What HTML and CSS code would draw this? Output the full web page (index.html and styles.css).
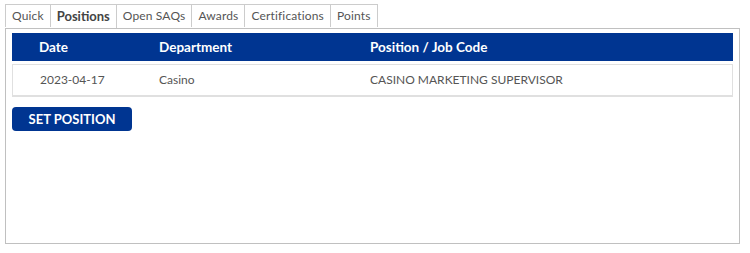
FILE: index.html
```html
<!DOCTYPE html>
<html lang="en">
<head>
<meta charset="UTF-8" />
<title>Positions</title>
<link rel="stylesheet" href="styles.css">
</head>
<body>

<div class="tabs">
  <div class="tab">Quick</div>
  <div class="tab active">Positions</div>
  <div class="tab">Open SAQs</div>
  <div class="tab">Awards</div>
  <div class="tab">Certifications</div>
  <div class="tab">Points</div>
</div>

<div class="panel">
  <div class="grid-head">
    <div class="cell">Date</div>
    <div class="cell">Department</div>
    <div class="cell">Position / Job Code</div>
  </div>
  <div class="grid-row">
    <div class="cell">2023-04-17</div>
    <div class="cell">Casino</div>
    <div class="cell">CASINO MARKETING SUPERVISOR</div>
  </div>
  <button class="btn">SET POSITION</button>
</div>

</body>
</html>
```

FILE: styles.css
```css
body {
  margin: 0;
  padding: 4px 10px 0 5px;
  font-family: Lato, "Open Sans", sans-serif;
  color: #555;
  background: white;
}

/* Tabs */
.tabs {
  display: flex;
  position: relative;
  z-index: 1;
}
.tab {
  height: 22px;
  line-height: 22px;
  padding: 0 6px;
  font-size: 12px;
  letter-spacing: 0.15px;
  border: 1px solid #ccc;
  border-bottom: none;
  border-left: none;
  background: white;
}
.tab:first-child {
  border-left: 1px solid #ccc;
}
.tab.active {
  height: 23px;
  font-size: 13px;
  letter-spacing: 0;
  font-weight: bold;
  color: #444;
}

/* Panel */
.panel {
  height: 210px;
  border: 1px solid #c0c0c0;
  padding: 4px 6px 0 6px;
}
.grid-head {
  display: grid;
  grid-template-columns: 120px 211px 1fr;
  height: 28px;
  line-height: 28px;
  background: #003591;
  color: white;
  font-size: 13.5px;
  font-weight: bold;
}
.grid-row {
  display: grid;
  grid-template-columns: 119px 211px 1fr;
  margin-top: 3px;
  height: 30px;
  line-height: 30px;
  border: 1px solid #e0e0e0;
  border-bottom: 2px solid #e0e0e0;
  font-size: 12px;
  color: #555;
}
.cell {
  padding-left: 27px;
}
.btn {
  display: block;
  margin-top: 10px;
  width: 120px;
  height: 24px;
  padding: 0;
  border: none;
  border-radius: 4px;
  background: #003591;
  color: white;
  font-family: Lato, "Open Sans", sans-serif;
  font-size: 13px;
  font-weight: bold;
  cursor: pointer;
}
```
